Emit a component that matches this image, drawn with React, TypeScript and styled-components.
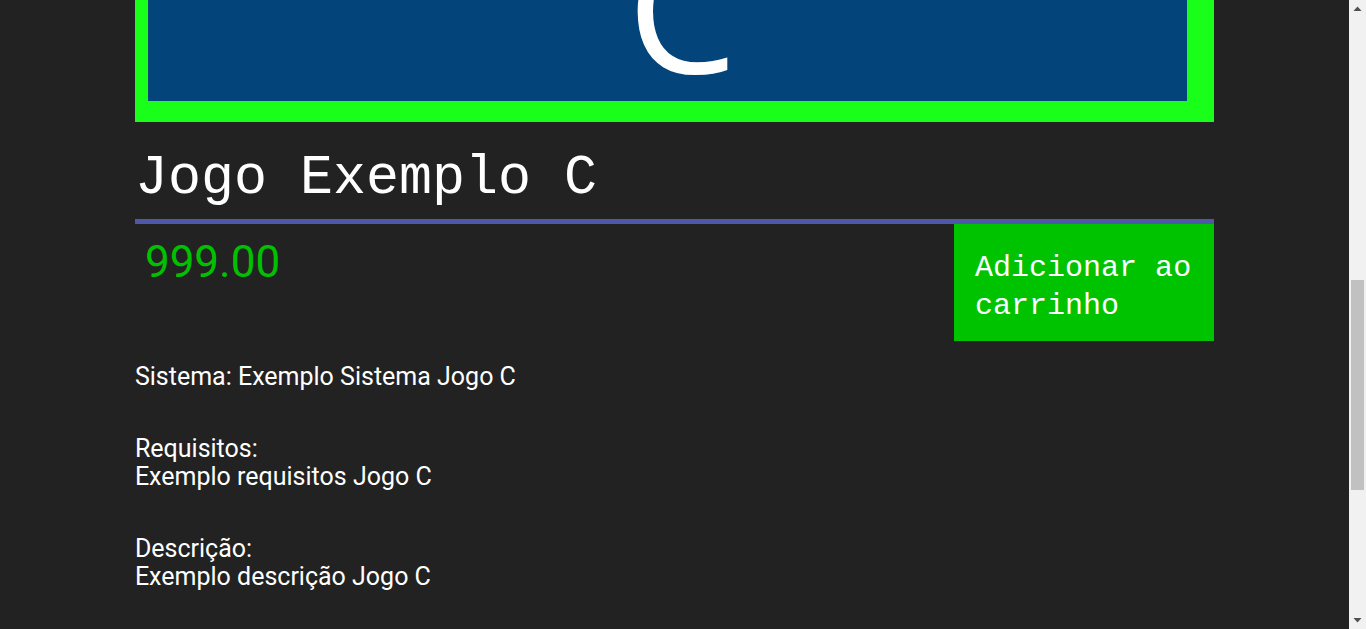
import React, { useLayoutEffect, useRef } from "react";
import styled, { createGlobalStyle } from "styled-components";

const GlobalStyle = createGlobalStyle`
  html, body {
    margin: 0;
    background: #222222;
    overflow: hidden;
  }
  body {
    font-family: Roboto, "Noto Sans", sans-serif;
    color: #ffffff;
  }
`;

const Shell = styled.div`
  display: flex;
  height: 100vh;
  overflow: hidden;
`;

const Viewport = styled.div`
  flex: 1;
  min-width: 0;
  overflow: hidden;
`;

const ScrollBar = styled.div`
  width: 17px;
  flex: none;
  display: flex;
  flex-direction: column;
  background: #f1f1f1;
`;

const ArrowButton = styled.div`
  height: 17px;
  display: flex;
  align-items: center;
  justify-content: center;
  flex: none;
`;

const Track = styled.div`
  flex: 1;
  padding: 263px 2px 0;
`;

const Thumb = styled.div`
  height: 210px;
  background: #c1c1c1;
`;

const Page = styled.main`
  min-height: 1782px;
  box-sizing: border-box;
  padding-top: 30px;
`;

const Content = styled.div`
  width: 80%;
  margin: 0 auto;
`;

const Cover = styled.div`
  background: #1aff1a;
  padding: 13px 27px 21px 13px;
`;

const CoverArt = styled.div`
  height: 846px;
  box-sizing: border-box;
  background: #03457a;
  display: flex;
  align-items: flex-end;
  justify-content: center;
  padding-left: 29px;
`;

const CoverLetter = styled.span`
  font-family: "Open Sans", sans-serif;
  font-size: 175px;
  line-height: 1;
  padding-bottom: 8px;
  color: #ffffff;
`;

const Title = styled.h1`
  margin: 25px 0 0;
  padding-bottom: 8px;
  border-bottom: 5px solid #4f57a8;
  font-family: "Liberation Mono", monospace;
  font-weight: normal;
  font-size: 55px;
  line-height: 64px;
`;

const BuyRow = styled.div`
  display: flex;
  justify-content: space-between;
  align-items: flex-start;
`;

const Price = styled.div`
  padding: 12px 10px;
  font-family: Roboto, sans-serif;
  font-size: 44px;
  color: #00c000;
`;

const CartButton = styled.button`
  width: 260px;
  box-sizing: border-box;
  padding: 25px 20px 16px 21px;
  border: none;
  border-radius: 0;
  background: #00c300;
  color: #ffffff;
  text-align: left;
  font-family: "Liberation Mono", monospace;
  font-size: 30px;
  line-height: 38px;
  cursor: pointer;
`;

const Info = styled.section`
  display: flex;
  flex-direction: column;
  gap: 44px;
  margin-top: 22px;
`;

const InfoBlock = styled.p`
  margin: 0;
  font-size: 25px;
  line-height: 28px;
`;

function Arrow({ up }: { up?: boolean }) {
  return (
    <svg width="9" height="5" viewBox="0 0 9 5">
      <path d={up ? "M0.5 5 L4.5 0.5 L8.5 5 Z" : "M0.5 0 L4.5 4.5 L8.5 0 Z"} fill="#505050" />
    </svg>
  );
}

export default function App() {
  const viewRef = useRef<HTMLDivElement>(null);

  useLayoutEffect(() => {
    if (viewRef.current) viewRef.current.scrollTop = 788;
  }, []);

  return (
    <>
      <GlobalStyle />
      <Shell>
        <Viewport ref={viewRef}>
          <Page>
            <Content>
              <Cover>
                <CoverArt>
                  <CoverLetter>C</CoverLetter>
                </CoverArt>
              </Cover>
              <Title>Jogo Exemplo C</Title>
              <BuyRow>
                <Price>999.00</Price>
                <CartButton>Adicionar ao carrinho</CartButton>
              </BuyRow>
              <Info>
                <InfoBlock>Sistema: Exemplo Sistema Jogo C</InfoBlock>
                <InfoBlock>
                  Requisitos:
                  <br />
                  Exemplo requisitos Jogo C
                </InfoBlock>
                <InfoBlock>
                  Descrição:
                  <br />
                  Exemplo descrição Jogo C
                </InfoBlock>
              </Info>
            </Content>
          </Page>
        </Viewport>
        <ScrollBar>
          <ArrowButton>
            <Arrow up />
          </ArrowButton>
          <Track>
            <Thumb />
          </Track>
          <ArrowButton>
            <Arrow />
          </ArrowButton>
        </ScrollBar>
      </Shell>
    </>
  );
}
